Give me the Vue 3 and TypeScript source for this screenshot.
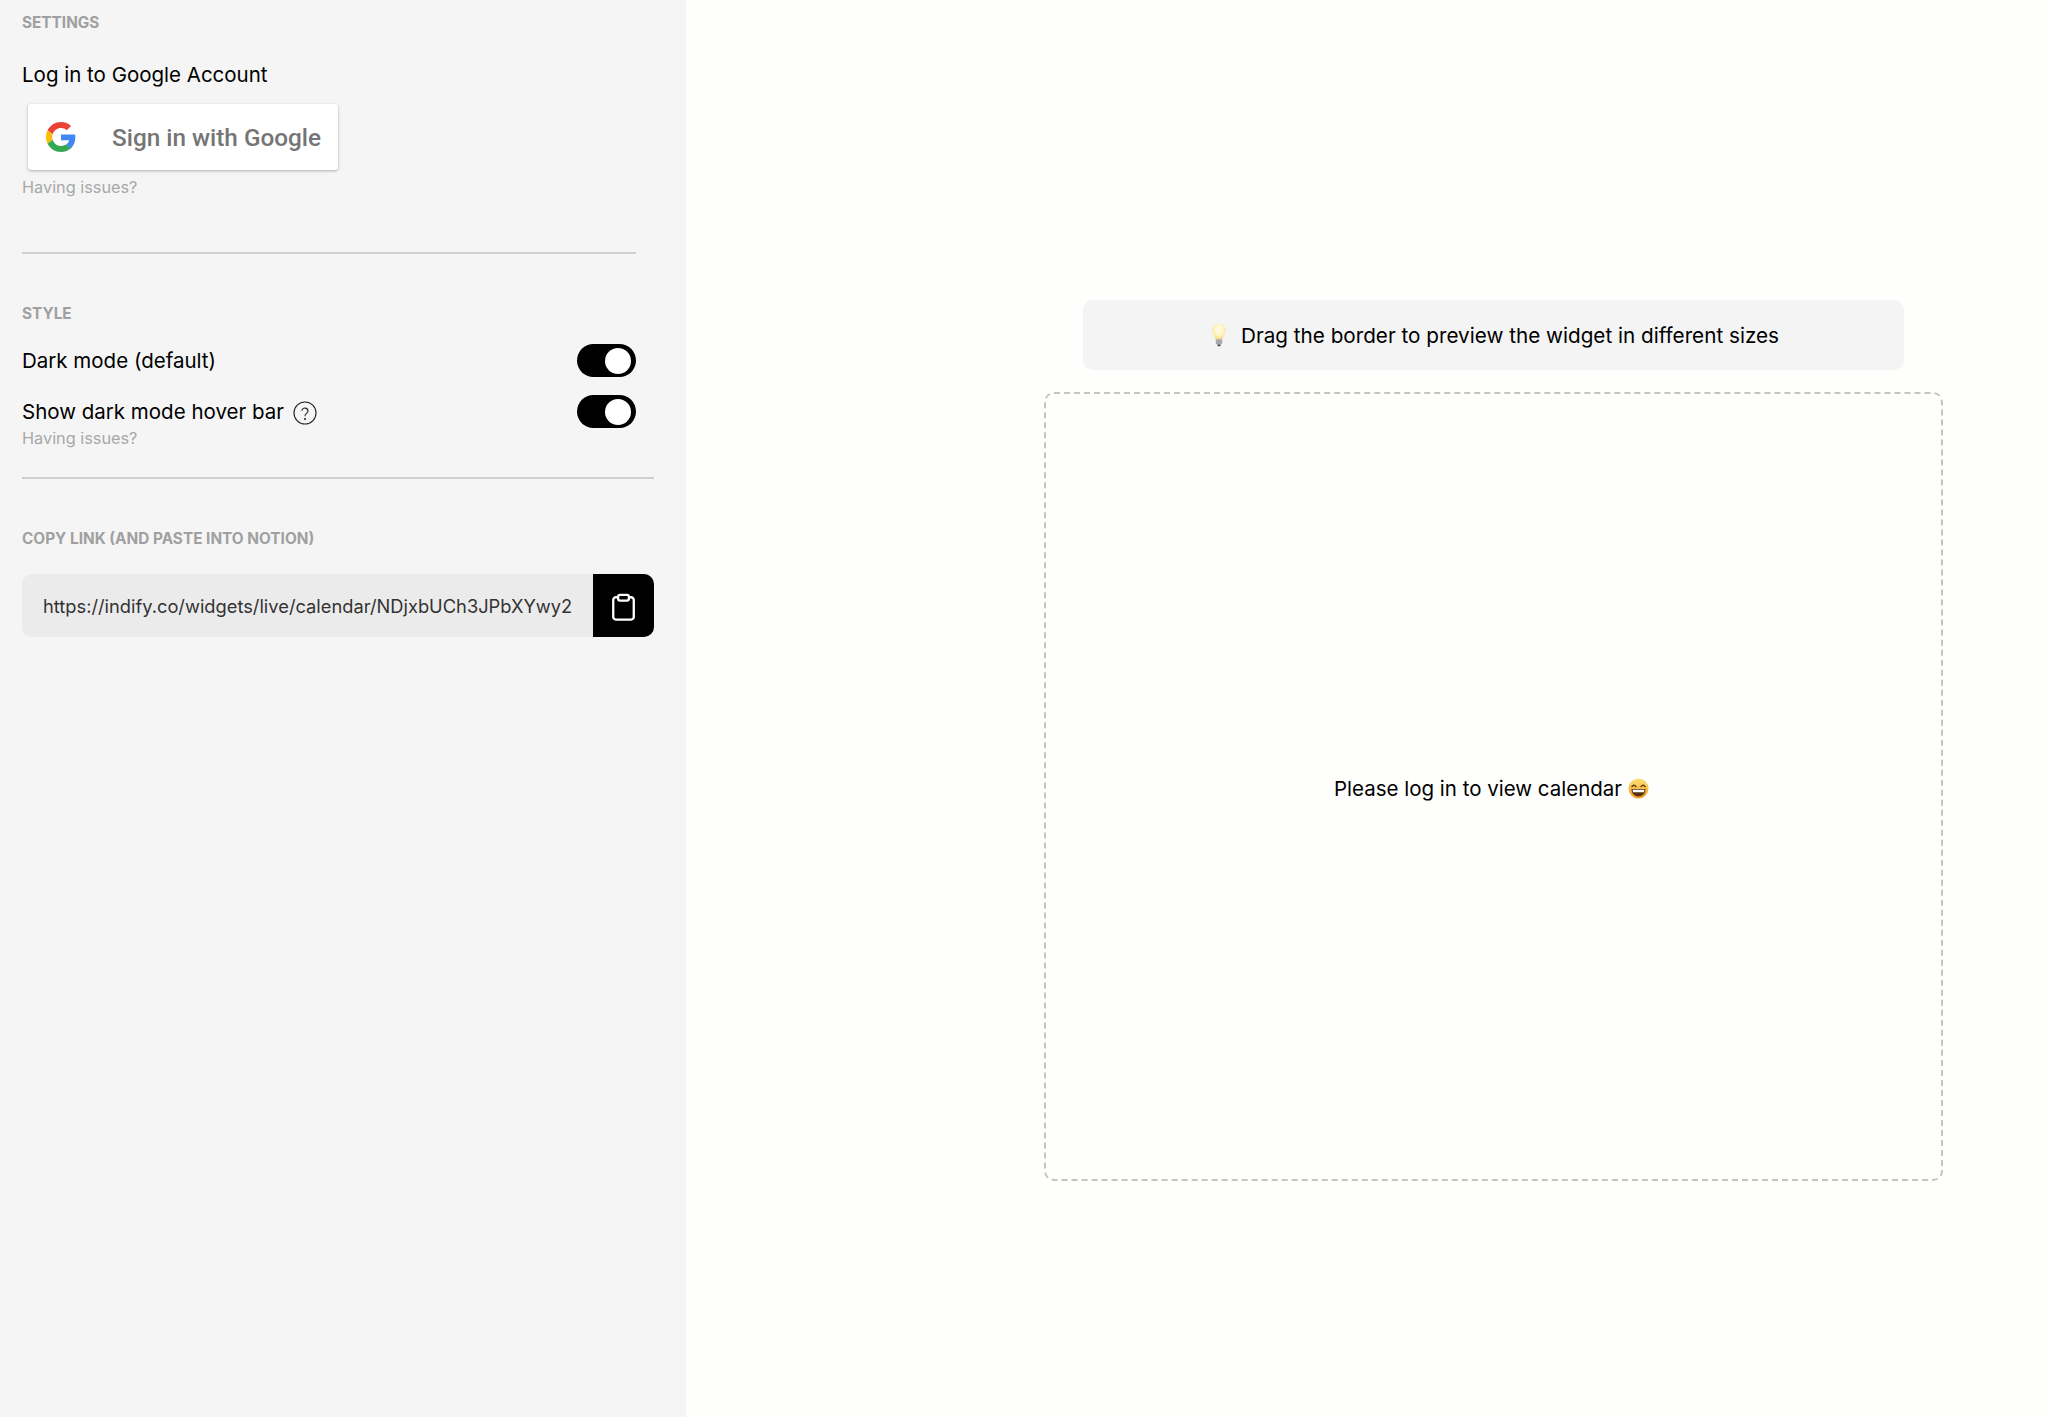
<script setup lang="ts">
const url = 'https://indify.co/widgets/live/calendar/NDjxbUCh3JPbXYwy2Yq7'
</script>

<template>
  <div class="page">
    <aside class="side">
      <h2 class="title first">SETTINGS</h2>
      <div class="label login">Log in to Google Account</div>
      <button class="google" type="button">
        <svg class="g" viewBox="0 0 48 48">
          <path fill="#EA4335" d="M24 9.5c3.54 0 6.71 1.22 9.21 3.6l6.85-6.85C35.9 2.38 30.47 0 24 0 14.62 0 6.51 5.38 2.56 13.22l7.98 6.19C12.43 13.72 17.74 9.5 24 9.5z"/>
          <path fill="#4285F4" d="M46.98 24.55c0-1.57-.15-3.09-.38-4.55H24v9.02h12.94c-.58 2.96-2.26 5.48-4.78 7.18l7.73 6c4.51-4.18 7.09-10.36 7.09-17.65z"/>
          <path fill="#FBBC05" d="M10.53 28.59c-.48-1.45-.76-2.99-.76-4.59s.27-3.14.76-4.59l-7.98-6.19C.92 16.46 0 20.12 0 24c0 3.88.92 7.54 2.56 10.78l7.97-6.19z"/>
          <path fill="#34A853" d="M24 48c6.48 0 11.93-2.13 15.89-5.81l-7.73-6c-2.15 1.45-4.92 2.3-8.16 2.3-6.26 0-11.57-4.22-13.47-9.91l-7.98 6.19C6.51 42.62 14.62 48 24 48z"/>
        </svg>
        <span>Sign in with Google</span>
      </button>
      <div class="hint hint-a">Having issues?</div>
      <hr class="rule short" />

      <h2 class="title style-title">STYLE</h2>
      <div class="row row-a">
        <span class="label">Dark mode (default)</span>
        <span class="toggle"><i></i></span>
      </div>
      <div class="row row-b">
        <span class="label with-help">
          Show dark mode hover bar
          <svg class="help" viewBox="0 0 24 24" fill="none" stroke="#222" stroke-width="1.1" stroke-linecap="round">
            <circle cx="12" cy="12" r="11" />
            <path d="M8.9 9.4a3.1 3.1 0 0 1 6.1.6c0 2.1-3 2.6-3 4.7" />
            <circle cx="12" cy="17.9" r=".45" fill="#222" />
          </svg>
        </span>
        <span class="toggle"><i></i></span>
      </div>
      <div class="hint hint-b">Having issues?</div>
      <hr class="rule" />

      <h2 class="title copy-title">COPY LINK (AND PASTE INTO NOTION)</h2>
      <div class="copy">
        <input class="url" :value="url" readonly />
        <button class="clip" type="button" aria-label="Copy">
          <svg viewBox="0 0 28 32" fill="none" stroke="#fff" stroke-width="2.6" stroke-linejoin="round">
            <path d="M8 4.5H5.5A3 3 0 0 0 2.5 7.5v19a3 3 0 0 0 3 3h17a3 3 0 0 0 3-3v-19a3 3 0 0 0-3-3H20" />
            <rect x="8" y="1.8" width="12" height="6.4" rx="2" />
          </svg>
        </button>
      </div>
    </aside>

    <main class="main">
      <div class="notice">
        <svg class="bulb" viewBox="0 0 16 24">
          <defs>
            <radialGradient id="glass" cx="50%" cy="40%" r="60%">
              <stop offset="0" stop-color="#fffdf0" />
              <stop offset=".65" stop-color="#fff3b8" />
              <stop offset="1" stop-color="#f4d67a" />
            </radialGradient>
          </defs>
          <path fill="url(#glass)" d="M8 .8c-3.9 0-6.6 2.9-6.6 6.5 0 3.3 2.6 5.2 3.1 9h7c.5-3.8 3.1-5.7 3.1-9C14.600 3.700 11.900.8 8 .8z" />
          <rect x="4.800" y="16.300" width="6.400" height="5" rx="1" fill="#a9a9a9" />
          <rect x="6.300" y="21.300" width="3.400" height="2" rx="1" fill="#555" />
        </svg>
        <span>Drag the border to preview the widget in different sizes</span>
      </div>
      <div class="frame">
        <span class="please">
          Please log in to view calendar
          <svg class="smile" viewBox="0 0 24 24">
            <defs>
              <linearGradient id="face" x1="0" y1="0" x2="0" y2="1">
                <stop offset="0" stop-color="#fde37a" />
                <stop offset="1" stop-color="#f09a1f" />
              </linearGradient>
            </defs>
            <circle cx="12" cy="12" r="11.500" fill="url(#face)" />
            <path d="M4.500 9.800q2.300-3 4.600 0M14.900 9.800q2.300-3 4.600 0" fill="none" stroke="#5a3a10" stroke-width="1.600" stroke-linecap="round" />
            <path d="M4 12.500h16c0 5.300-3.600 8.500-8 8.500s-8-3.200-8-8.500z" fill="#5a3210" />
            <path d="M5.300 13.300h13.400c0 1.500-.3 2.400-.8 3.100H6.100c-.5-.7-.8-1.600-.8-3.100z" fill="#fff" />
          </svg>
        </span>
      </div>
    </main>
  </div>
</template>

<style>
html, body { margin: 0; background: #fefefd; }
</style>

<style scoped>
.page {
  display: flex;
  width: 2048px;
  height: 1417px;
  overflow: hidden;
  font-family: Inter, "Liberation Sans", sans-serif;
  color: #000;
  background: #fefefd;
}
.side {
  box-sizing: border-box;
  width: 686px;
  flex: none;
  padding: 0 32px 0 22px;
  background: #f5f5f5;
  display: flex;
  flex-direction: column;
}
.title {
  margin: 0;
  font-size: 15.350px;
  line-height: 20px;
  font-weight: 700;
  color: #a0a0a0;
}
.first { margin-top: 13px; }
.label {
  font-size: 20.500px;
  line-height: 30px;
}
.login { margin-top: 27px; }
.google {
  box-sizing: border-box;
  width: 310px;
  height: 66px;
  margin: 14px 0 0 6px;
  padding: 0 17px 0 18px;
  border: 0;
  border-radius: 3px;
  background: #fff;
  box-shadow: 0 1px 3px rgba(0, 0, 0, .3);
  display: flex;
  align-items: center;
  justify-content: space-between;
  font-family: Roboto, sans-serif;
  font-weight: 500;
  font-size: 24.300px;
  color: #757575;
}
.g { width: 30px; height: 30px; flex: none; }
.hint {
  font-size: 16.300px;
  line-height: 20px;
  color: #a8a8a8;
}
.hint-a { margin-top: 7px; }
.rule {
  width: 100%;
  height: 2px;
  margin: 0;
  border: 0;
  background: #cfcfcf;
}
.short { width: 614px; margin-top: 55px; }
.style-title { margin-top: 50px; }
.row {
  width: 614px;
  display: flex;
  align-items: center;
  justify-content: space-between;
}
.row-a { margin-top: 20px; }
.row-b { margin-top: 18px; }
.with-help { display: flex; align-items: center; gap: 9px; }
.help { width: 24px; height: 24px; margin-top: 2px; }
.toggle {
  box-sizing: border-box;
  width: 59px;
  height: 33px;
  padding: 4px 5px;
  border-radius: 17px;
  background: #000;
  display: flex;
  justify-content: flex-end;
  flex: none;
}
.toggle i {
  width: 26px;
  height: 26px;
  border-radius: 50%;
  background: #fff;
  display: block;
}
.hint-b { margin-top: 0; }
.hint-b + .rule { margin-top: 29px; }
.copy-title { margin-top: 50px; }
.copy {
  display: flex;
  height: 63px;
  margin-top: 25px;
  border-radius: 10px;
  overflow: hidden;
  background: #ebebeb;
}
.url {
  flex: 1;
  min-width: 0;
  margin: 0 21px;
  padding: 0;
  border: 0;
  outline: 0;
  background: transparent;
  font: 400 18.300px Inter, "Liberation Sans", sans-serif;
  color: #333;
}
.clip {
  width: 61px;
  flex: none;
  padding: 0;
  border: 0;
  background: #000;
  display: flex;
  align-items: center;
  justify-content: center;
}
.clip svg { width: 25px; height: 29px; margin-top: 3px; }
.main {
  flex: 1;
  min-width: 0;
  box-sizing: border-box;
  padding: 300px 105px 0 358px;
  display: flex;
  flex-direction: column;
}
.notice {
  height: 70px;
  margin: 0 39px;
  border-radius: 10px;
  background: #f4f4f5;
  display: flex;
  align-items: center;
  justify-content: center;
  gap: 14px;
  font-size: 20.700px;
}
.bulb { width: 16px; height: 24px; margin-left: 3px; }
.frame {
  box-sizing: border-box;
  height: 789px;
  margin-top: 22px;
  border: 2px dashed #c4c4c4;
  border-radius: 10px;
  display: flex;
  align-items: center;
  justify-content: center;
}
.please {
  display: flex;
  align-items: center;
  gap: 6px;
  font-size: 20.500px;
  margin: 3px 0 0 -4px;
}
.smile { width: 21px; height: 21px; }
</style>
